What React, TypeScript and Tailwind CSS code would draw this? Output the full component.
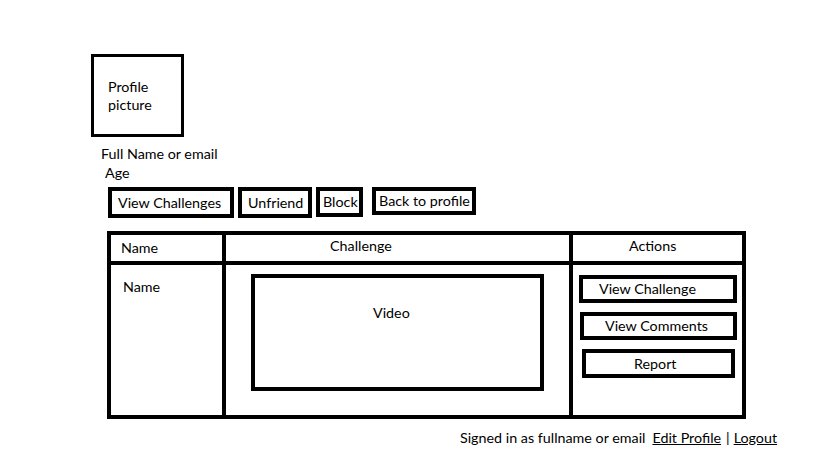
export default function App() {
  return (
    <div className="w-[819px] h-[460px] bg-white text-black font-['Lato',sans-serif] text-[14.3px] leading-[18px] overflow-hidden">
      {/* profile header */}
      <div className="pt-[54px] pl-[91px]">
        <div className="w-[93px] h-[83px] border-[3px] border-black pl-[14px] pt-[21px]">
          <p>Profile</p>
          <p>picture</p>
        </div>
        <p className="mt-[8px] pl-[10px] h-[18px]">Full Name or email</p>
        <p className="mt-[1px] pl-[14px] h-[18px]">Age</p>
      </div>

      {/* action buttons */}
      <div className="mt-[5px] pl-[108px] flex items-start">
        <button className="w-[126px] h-[31px] border-4 border-black flex items-center pl-[6px]">View Challenges</button>
        <button className="ml-[4px] w-[74px] h-[31px] border-4 border-black flex items-center pl-[6px]">Unfriend</button>
        <button className="ml-[4px] w-[47px] h-[30px] border-4 border-black flex items-center pl-[3px]">Block</button>
        <button className="ml-[9px] w-[104px] h-[28px] border-4 border-black flex items-center pl-[3px]">Back to profile</button>
      </div>

      {/* challenges table */}
      <div className="mt-[13px] ml-[107px] w-[639px] h-[188px] border-4 border-black flex flex-col">
        <div className="h-[30px] border-b-4 border-black flex">
          <div className="w-[115px] border-r-4 border-black flex items-center pl-[10px]">Name</div>
          <div className="w-[347px] border-r-4 border-black pl-[104px] pt-[2px]">Challenge</div>
          <div className="flex-1 pl-[56px] pt-[2px]">Actions</div>
        </div>
        <div className="flex-1 flex">
          <div className="w-[115px] border-r-4 border-black pl-[12px] pt-[13px]">Name</div>
          <div className="w-[347px] border-r-4 border-black pl-[25px] pt-[9px]">
            <div className="w-[293px] h-[117px] border-4 border-black pl-[118px] pt-[26px]">Video</div>
          </div>
          <div className="flex-1 flex flex-col items-start pl-[6px] pt-[10px]">
            <button className="w-[158px] h-[28px] border-4 border-black flex items-center pl-[16px]">View Challenge</button>
            <button className="mt-[9px] ml-[1px] w-[157px] h-[28px] border-4 border-black flex items-center pl-[21px]">View Comments</button>
            <button className="mt-[9px] ml-[3px] w-[153px] h-[29px] border-4 border-black flex items-center pl-[48px]">Report</button>
          </div>
        </div>
      </div>

      {/* footer */}
      <div className="mt-[10px] pl-[460px] flex items-center h-[18px]">
        <span>Signed in as fullname or email</span>
        <a className="ml-[7px] underline">Edit Profile</a>
        <span className="ml-[5px] mr-[4px]">|</span>
        <a className="underline">Logout</a>
      </div>
    </div>
  );
}
